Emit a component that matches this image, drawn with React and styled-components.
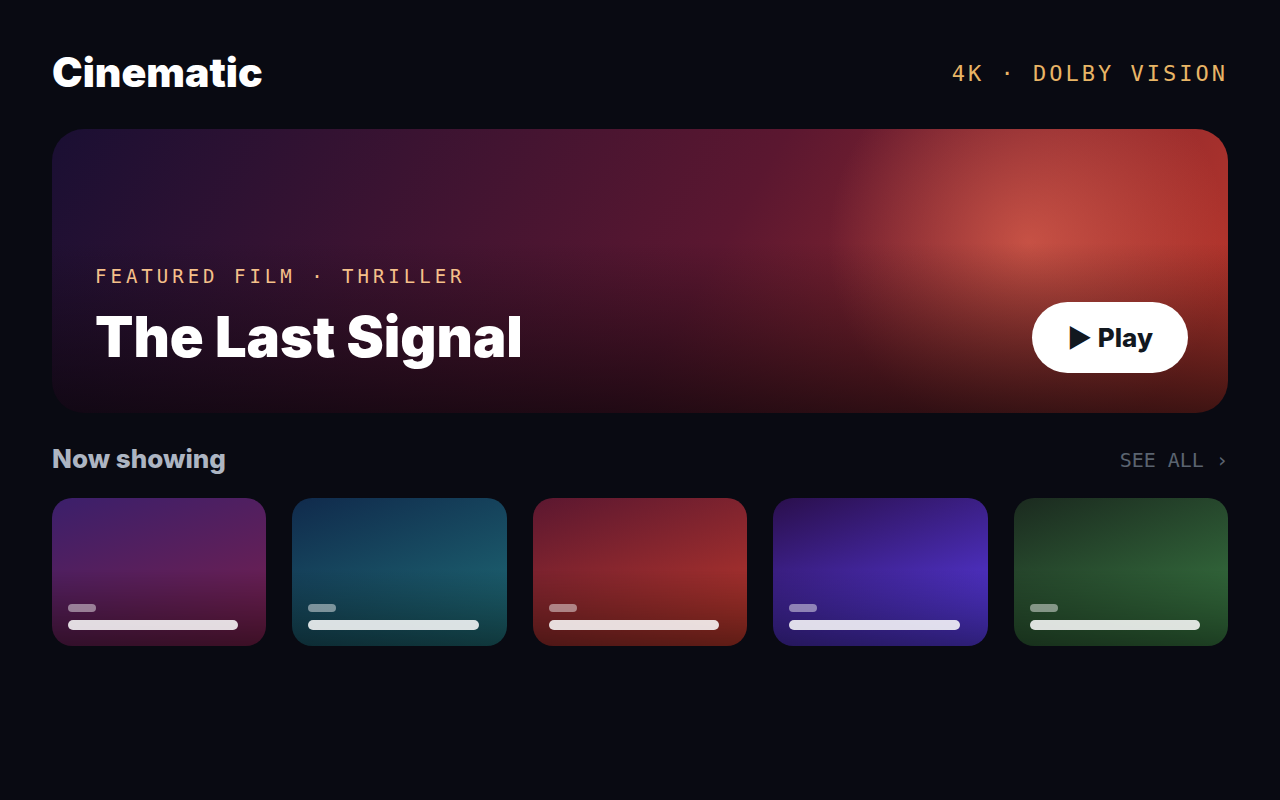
import React from "react";
import styled, { createGlobalStyle } from "styled-components";

const sans = `Inter, "Liberation Sans", sans-serif`;
const mono = `"DejaVu Sans Mono", "Liberation Mono", monospace`;

const GlobalStyle = createGlobalStyle`
  *, *::before, *::after { box-sizing: border-box; }
  body {
    margin: 0;
    min-height: 100vh;
    background: #090a12;
    color: #fff;
    font-family: ${sans};
  }
`;

const Page = styled.div`
  padding: 44px 52px;
`;

const Header = styled.header`
  display: flex;
  align-items: center;
  justify-content: space-between;
  margin-bottom: 29px;
`;

const Brand = styled.h1`
  margin: 0;
  font-size: 41px;
  font-weight: 900;
  line-height: 56px;
`;

const Quality = styled.span`
  padding-top: 4px;
  font-family: ${mono};
  font-size: 22px;
  line-height: 28px;
  letter-spacing: 3px;
  color: #e8b566;
`;

const Hero = styled.section`
  display: flex;
  align-items: flex-end;
  justify-content: space-between;
  min-height: 284px;
  padding: 40px 40px 40px 43px;
  border-radius: 32px;
  background:
    linear-gradient(180deg, transparent 40%, rgba(8, 4, 8, 0.7) 100%),
    radial-gradient(circle at 83% 40%, rgba(255, 122, 92, 0.5), transparent 200px),
    linear-gradient(120deg, #1a0f33 0%, #5b1730 55%, #c0392b 100%);
`;

const Eyebrow = styled.p`
  margin: 0 0 12px;
  font-family: ${mono};
  font-size: 19px;
  line-height: 26px;
  letter-spacing: 4px;
  color: #f5c08a;
`;

const FilmTitle = styled.h2`
  margin: 0;
  font-size: 56px;
  font-weight: 900;
  line-height: 72px;
`;

const PlayButton = styled.button`
  padding: 18px 35px;
  border: 0;
  border-radius: 36px;
  background: #fff;
  color: #12181f;
  font-family: ${sans};
  font-size: 26px;
  font-weight: 800;
  line-height: 35px;
  cursor: pointer;
`;

const SectionHeader = styled.div`
  display: flex;
  align-items: center;
  justify-content: space-between;
  margin: 27px 0 20px;
`;

const SectionTitle = styled.h2`
  margin: 0;
  font-size: 26px;
  font-weight: 800;
  line-height: 38px;
  color: #adb5c2;
`;

const SeeAll = styled.a`
  padding-top: 2px;
  font-family: ${mono};
  font-size: 20px;
  line-height: 26px;
  color: #5b6470;
  text-decoration: none;
`;

const Posters = styled.div`
  display: grid;
  grid-template-columns: repeat(5, 1fr);
  gap: 26px;
`;

const Poster = styled.article`
  display: flex;
  flex-direction: column;
  justify-content: flex-end;
  gap: 8px;
  height: 148px;
  padding: 16px 28px 16px 16px;
  border-radius: 20px;
  background:
    linear-gradient(180deg, transparent 48%, rgba(0, 0, 0, 0.5) 100%),
    linear-gradient(160deg, ${(p) => p.$from}, ${(p) => p.$to});
`;

const TagBar = styled.div`
  width: 28px;
  height: 8px;
  border-radius: 4px;
  background: rgba(255, 255, 255, 0.45);
`;

const TitleBar = styled.div`
  height: 10px;
  border-radius: 5px;
  background: rgba(255, 255, 255, 0.85);
`;

const posters = [
  { from: "#3b1f6b", to: "#7a1f4b" },
  { from: "#102a4c", to: "#1f6f78" },
  { from: "#5b1730", to: "#c0392b" },
  { from: "#2a0f4c", to: "#5b3df0" },
  { from: "#1b2a1f", to: "#3a7d44" },
];

export default function App() {
  return (
    <>
      <GlobalStyle />
      <Page>
        <Header>
          <Brand>Cinematic</Brand>
          <Quality>4K · DOLBY VISION</Quality>
        </Header>
        <main>
          <Hero>
            <div>
              <Eyebrow>FEATURED FILM · THRILLER</Eyebrow>
              <FilmTitle>The Last Signal</FilmTitle>
            </div>
            <PlayButton type="button">▶ Play</PlayButton>
          </Hero>
          <SectionHeader>
            <SectionTitle>Now showing</SectionTitle>
            <SeeAll href="#all">SEE ALL ›</SeeAll>
          </SectionHeader>
          <Posters>
            {posters.map((poster) => (
              <Poster key={poster.from} $from={poster.from} $to={poster.to}>
                <TagBar />
                <TitleBar />
              </Poster>
            ))}
          </Posters>
        </main>
      </Page>
    </>
  );
}
